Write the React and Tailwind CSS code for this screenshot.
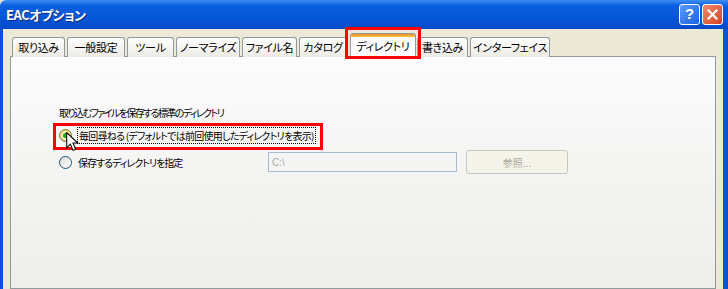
import React from 'react';

const jp = "font-['MS_UI_Gothic','Noto_Sans_CJK_JP',sans-serif] [font-feature-settings:'palt'] whitespace-nowrap";

const tabs = [
  { label: '取り込み', w: 'w-[53px]' },
  { label: '一般設定', w: 'w-[58px]' },
  { label: 'ツール', w: 'w-[47px]' },
  { label: 'ノーマライズ', w: 'w-[64px]' },
  { label: 'ファイル名', w: 'w-[55px]' },
  { label: 'カタログ', w: 'w-[48px]' },
  { label: 'ディレクトリ', w: 'w-[66px]', active: true },
  { label: '書き込み', w: 'w-[51px]' },
  { label: 'インターフェイス', w: 'w-[80px]' },
];

function Tab({ label, w, active }) {
  if (active) {
    return (
      <div className="relative ml-[1px] -mr-[1px] z-10">
        <div className="absolute -left-[5px] -right-[5px] -top-[6px] -bottom-[2px] border-[3px] border-[#ff0000]" />
        <div className={`${w} h-[24px] flex flex-col rounded-t-[3px] border border-b-0 border-[#919b9c] bg-[#fcfcfe] overflow-hidden`}>
          <div className="h-[3px] bg-gradient-to-b from-[#e68b2c] to-[#ffc73c]" />
          <div className={`flex-1 flex items-center justify-center pb-[1px] text-[11px] tracking-[-0.3px] text-black ${jp}`}>{label}</div>
        </div>
      </div>
    );
  }
  return (
    <div className={`${w} h-[20px] flex items-center justify-center rounded-t-[3px] border border-b-0 border-[#919b9c] bg-gradient-to-b from-[#ffffff] to-[#ecebe5] text-[11px] tracking-[-0.3px] text-black ${jp}`}>
      {label}
    </div>
  );
}

function Radio({ checked }) {
  return (
    <div className={`w-[13px] h-[13px] rounded-full flex items-center justify-center border ${checked ? 'border-[#6c8b55] bg-[#f8c365]' : 'border-[#1c5180] bg-gradient-to-br from-[#dcdcd6] to-[#ffffff]'}`}>
      {checked && (
        <div className="w-[9px] h-[9px] rounded-full bg-gradient-to-br from-[#fbe7a4] to-[#f3ecd9] flex items-center justify-center">
          <div className="w-[5px] h-[5px] rounded-full bg-[#21a121]" />
        </div>
      )}
    </div>
  );
}

export default function App() {
  return (
    <div className="w-[728px] h-[289px] overflow-hidden bg-[#ece9d8] flex flex-col">
      {/* title bar */}
      <div className="h-[29px] shrink-0 rounded-tl-[6px] bg-[linear-gradient(to_bottom,#3d8ef5_0%,#0a5fe0_20%,#0656d8_60%,#0549c8_100%)] flex items-center pl-[6px] pr-[5px]">
        <span className={`text-white text-[13px] font-bold tracking-[-0.5px] [text-shadow:1px_1px_0_#0a2a80] ${jp}`}>EACオプション</span>
        <div className="ml-auto flex gap-[2px]">
          <div className="w-[21px] h-[21px] rounded-[3px] border border-white bg-gradient-to-br from-[#5a9cf8] to-[#1d5ee0] flex items-center justify-center text-white text-[15px] font-bold font-['Liberation_Sans',sans-serif]">?</div>
          <div className="w-[21px] h-[21px] rounded-[3px] border border-white bg-gradient-to-br from-[#f08a6a] to-[#d4401c] flex items-center justify-center">
            <svg width="11" height="11" viewBox="0 0 11 11">
              <path d="M1.5 1.5 L9.5 9.5 M9.5 1.5 L1.5 9.5" stroke="#fff" strokeWidth="2.2" strokeLinecap="square" />
            </svg>
          </div>
        </div>
      </div>

      {/* body with blue frame */}
      <div className="flex-1 flex border-l-[3px] border-r-[5px] border-l-[#0b53d4] border-r-[#0b53d4]">
        <div className="flex-1 flex flex-col pl-[7px] pr-[7px] pt-[4px]">
          <div className="h-[24px] flex items-end gap-[2px] pl-[2px] relative z-10 -mb-[1px]">
            {tabs.map((t) => (
              <Tab key={t.label} {...t} />
            ))}
          </div>
          <div className="flex-1 border border-[#919b9c] bg-[linear-gradient(to_bottom,#fcfcfe_0%,#f4f4f2_50%,#efeee9_100%)] relative">
            <div className="pl-[48px] pt-[49px]">
              <div className={`text-[10px] leading-[14px] tracking-[-1.6px] text-black ${jp}`}>取り込むファイルを保存する標準のディレクトリ</div>

              <div className="mt-[6px] flex items-center h-[19px]">
                <div className="relative">
                  <div className="absolute -left-[6px] -top-[4px] w-[270px] h-[27px] border-[3px] border-[#ff0000]" />
                  <div className="relative flex items-center">
                    <Radio checked />
                    <div className={`ml-[5px] px-[1px] h-[17px] flex items-center border border-dotted border-black text-[10px] tracking-[-0.75px] text-black ${jp}`}>
                      毎回尋ねる (デフォルトでは前回使用したディレクトリを表示)
                    </div>
                  </div>
                  <svg className="absolute left-[7px] top-[5px]" width="13" height="21" viewBox="0 0 12 20">
                    <path d="M0.5 0.5 L0.5 15 L4 11.5 L6.5 17.5 L9 16.5 L6.5 10.5 L11 10.5 Z" fill="#fff" stroke="#000" strokeWidth="1" />
                  </svg>
                </div>
              </div>

              <div className="mt-[5px] flex items-center">
                <Radio />
                <div className={`ml-[6px] w-[190px] text-[10px] tracking-[-1px] text-black ${jp}`}>保存するディレクトリを指定</div>
                <div className="w-[189px] h-[20px] border border-[#a5bcd6] bg-[#f5f5f3] flex items-center pl-[3px] text-[10px] text-[#a9a9a9] font-['Liberation_Sans',sans-serif]">C:\</div>
                <div className={`ml-[9px] w-[102px] h-[24px] rounded-[3px] border border-[#c9c7ba] bg-[#f5f4ea] flex items-center justify-center text-[10px] text-[#aca899] ${jp}`}>参照...</div>
              </div>
            </div>
          </div>
        </div>
      </div>
    </div>
  );
}
